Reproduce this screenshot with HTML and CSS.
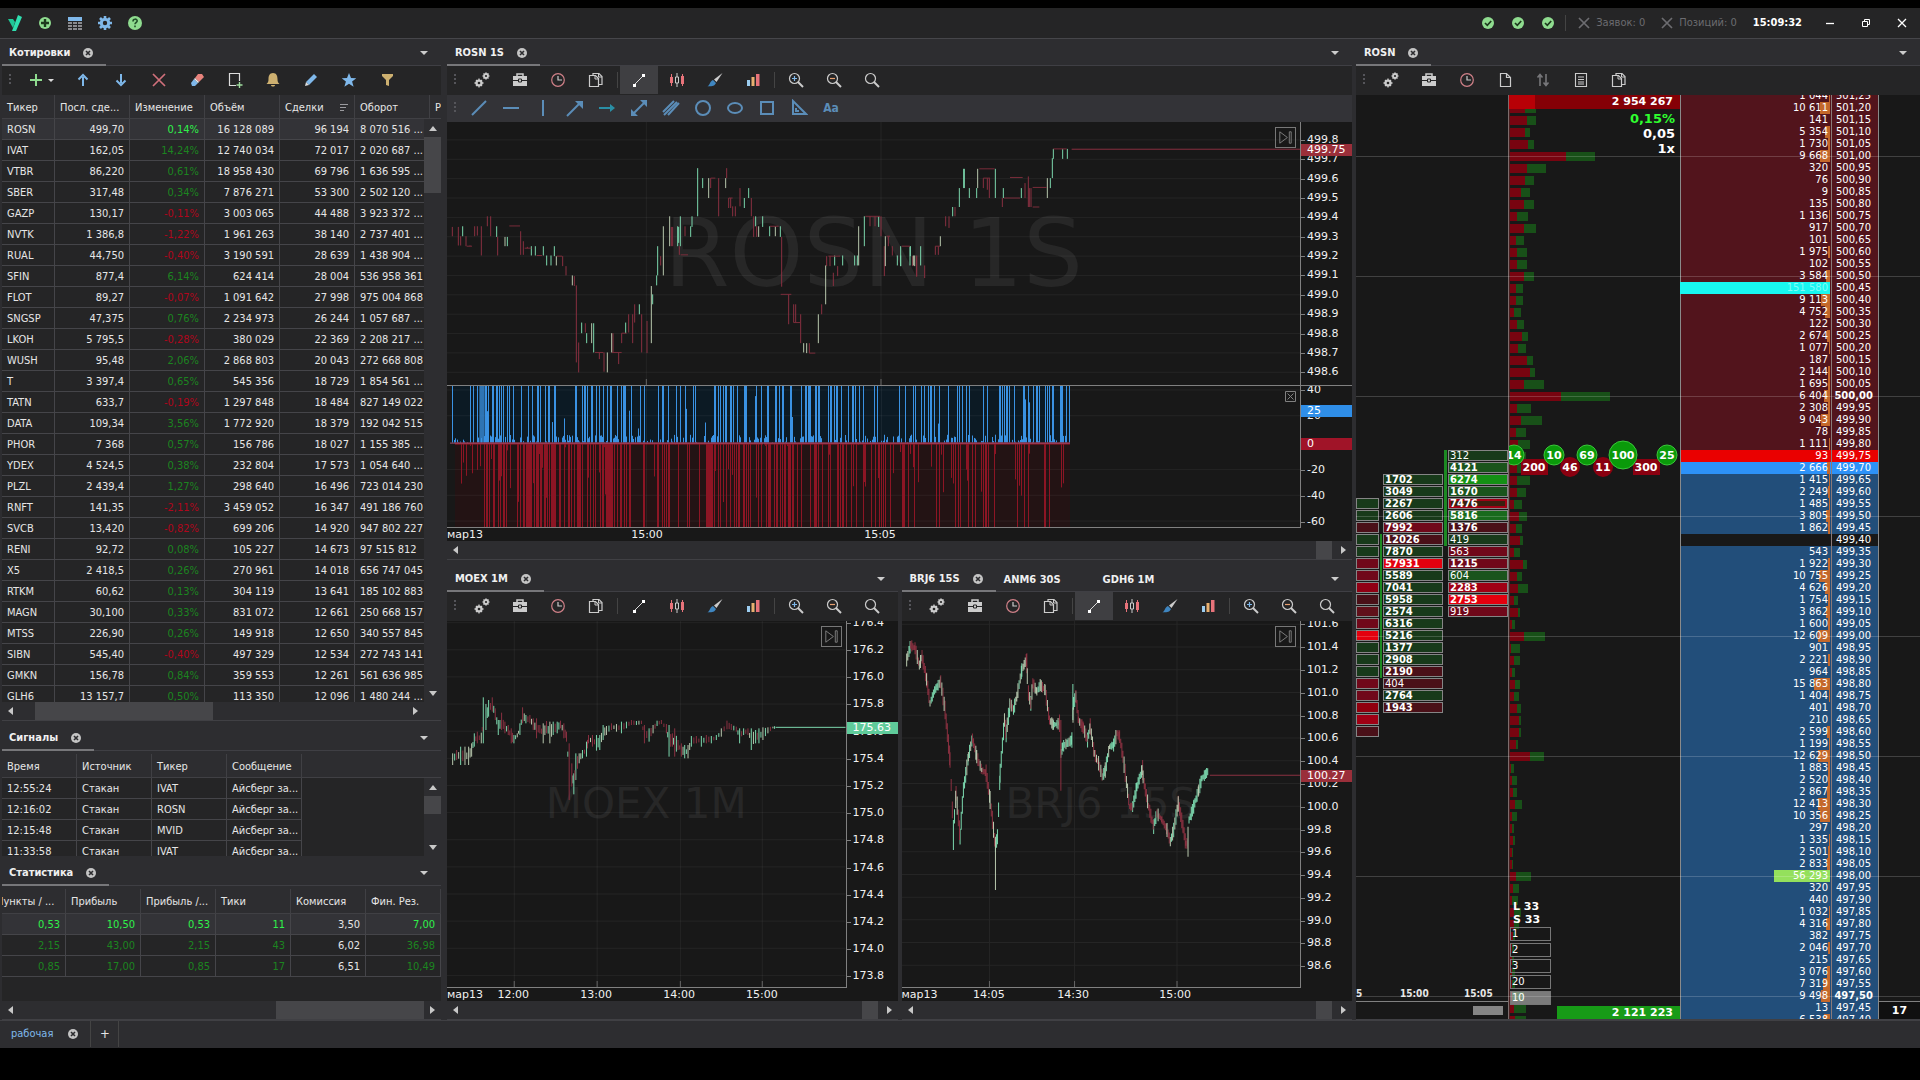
FILE: index.html
```html
<!DOCTYPE html>
<html lang="ru">
<head>
  <meta charset="UTF-8">
  <meta name="viewport" content="width=device-width, initial-scale=1.0">
  <title>Рабочая</title>
  <link rel="stylesheet" href="styles.css">
</head>
<body>

  <!-- Icon sprite -->
  <svg class="sprite" xmlns="http://www.w3.org/2000/svg">
    <symbol id="i-close-tab" viewBox="0 0 12 12"><circle cx="6" cy="6" r="5" fill="#c4c4c4"/><path d="M4 4l4 4M8 4l-4 4" stroke="#2d2d30" stroke-width="1.6"/></symbol>
    <symbol id="i-logo" viewBox="0 0 16 16"><path d="M1 4h5l2 3-2 6z" fill="#1fc796"/><path d="M11 0l4 2-6 14H5z" fill="#2fe0b0"/></symbol>
    <symbol id="i-add" viewBox="0 0 16 16"><circle cx="8" cy="8" r="6" fill="#8fdc8f"/><path d="M8 4v8M4 8h8" stroke="#1d3a1d" stroke-width="2.4"/></symbol>
    <symbol id="i-grid" viewBox="0 0 16 16"><path d="M1 2h14v4H1z" fill="#7fb8ea"/><path d="M1 7h4v2H1zM6 7h4v2H6zM11 7h4v2h-4zM1 10h4v2H1zM6 10h4v2H6zM11 10h4v2h-4zM1 13h4v2H1zM6 13h4v2H6zM11 13h4v2h-4z" fill="#8a8a8e"/></symbol>
    <symbol id="i-gear" viewBox="0 0 16 16"><circle cx="8" cy="8" r="3.7" fill="none" stroke="#7fb8ea" stroke-width="3"/><path d="M8 1v3M8 12v3M1 8h3M12 8h3M3 3l2 2M11 11l2 2M13 3l-2 2M5 11l-2 2" stroke="#7fb8ea" stroke-width="2.6"/></symbol>
    <symbol id="i-help" viewBox="0 0 16 16"><circle cx="8" cy="8" r="7" fill="#8fdc8f"/><path d="M6 6.4c0-3 4.200-2.800 4.200-.4 0 1.500-2.200 1.500-2.200 3.200M8 10.500v1.700" fill="none" stroke="#23502a" stroke-width="1.600"/></symbol>
    <symbol id="i-check" viewBox="0 0 16 16"><circle cx="8" cy="8" r="6" fill="#8fdc8f"/><path d="M5 8l2.300 2.300L11.200 6" fill="none" stroke="#1d3a1d" stroke-width="1.700"/></symbol>
    <symbol id="i-x" viewBox="0 0 16 16"><path d="M3 3l10 10M13 3L3 13" stroke="currentColor" stroke-width="1.700"/></symbol>
    <symbol id="i-min" viewBox="0 0 16 16"><path d="M4 8.500h8" stroke="#fff" stroke-width="1.300"/></symbol>
    <symbol id="i-restore" viewBox="0 0 16 16"><path d="M4.500 6.500h5v5h-5zM6.500 6.500v-2h5v5h-2" fill="none" stroke="#fff"/></symbol>
    <symbol id="i-win-close" viewBox="0 0 16 16"><path d="M4 4l8 8M12 4l-8 8" stroke="#fff" stroke-width="1.300"/></symbol>
    <symbol id="i-plus" viewBox="0 0 16 16"><path d="M8 2v12M2 8h12" stroke="#8fdc8f" stroke-width="2"/></symbol>
    <symbol id="i-up" viewBox="0 0 16 16"><path d="M8 14V5" stroke="#7fb8ea" stroke-width="2"/><path d="M3.500 7.500L8 3l4.500 4.500" fill="none" stroke="#7fb8ea" stroke-width="2"/></symbol>
    <symbol id="i-down" viewBox="0 0 16 16"><path d="M8 2v9" stroke="#7fb8ea" stroke-width="2"/><path d="M3.500 8.500L8 13l4.500-4.500" fill="none" stroke="#7fb8ea" stroke-width="2"/></symbol>
    <symbol id="i-del" viewBox="0 0 16 16"><path d="M2 2l12 12M14 2L2 14" stroke="#d0707a" stroke-width="1.700"/></symbol>
    <symbol id="i-eraser" viewBox="0 0 16 16"><path d="M9 2h4l2 3-5 5-4-4z" fill="#e8837c"/><path d="M5 7l4 4-3 3H3l-1-3z" fill="#7fb8ea"/><path d="M6 6l4 4-1 1-4-4z" fill="#eee"/></symbol>
    <symbol id="i-newsheet" viewBox="0 0 16 16"><path d="M12.500 9V1.500h-10v12H9" fill="none" stroke="#ddd" stroke-width="1.200"/><path d="M12.500 10v6M9.500 13h6" stroke="#9fdc9f" stroke-width="1.400"/></symbol>
    <symbol id="i-bell" viewBox="0 0 16 16"><path d="M8 1c3.500 0 4.500 3 4.500 6 0 2.500.5 3.500 2 5h-13c1.500-1.500 2-2.500 2-5C3.500 4 4.500 1 8 1zM6 13h4c0 2-4 2-4 0z" fill="#cdb070"/></symbol>
    <symbol id="i-pencil" viewBox="0 0 16 16"><path d="M11 2l3 3-8 8-3-3z" fill="#7fb8ea"/><path d="M3 10l3 3-4 1z" fill="#ddd"/></symbol>
    <symbol id="i-star" viewBox="0 0 16 16"><path d="M8 1l2 5 5.300.2-4.200 3.300 1.500 5.300L8 11.800l-4.600 3 1.500-5.300L.7 6.200 6 6z" fill="#7fb8ea"/></symbol>
    <symbol id="i-filter" viewBox="0 0 16 16"><path d="M3 2h11v2l-4 4v6l-3-1V8L3 4z" fill="#cdb070"/></symbol>
    <symbol id="i-gears" viewBox="0 0 16 16"><circle cx="5" cy="11" r="2.600" fill="none" stroke="#ccc" stroke-width="2"/><path d="M5 6.500v9M.5 11h9M2 8l6 6M8 8l-6 6" stroke="#ccc" stroke-width="1.300"/><circle cx="5" cy="11" r="1.300" fill="#252525"/><circle cx="12" cy="4" r="2" fill="none" stroke="#ccc" stroke-width="1.800"/><path d="M12 .3v7.400M8.300 4h7.400M9.500 1.500l5 5M14.500 1.500l-5 5" stroke="#ccc" stroke-width="1.100"/><circle cx="12" cy="4" r="1.100" fill="#252525"/></symbol>
    <symbol id="i-case" viewBox="0 0 16 16"><path d="M5 4V2h6v2" fill="none" stroke="#ccc" stroke-width="1.500"/><path d="M1 4h14v4H1zM1 9h14v5H1z" fill="#ccc"/><path d="M6.500 7h3v3h-3z" fill="#ccc" stroke="#252525"/></symbol>
    <symbol id="i-clock" viewBox="0 0 16 16"><circle cx="8" cy="8" r="6.300" fill="none" stroke="#d08088" stroke-width="1.200"/><path d="M8 4v4h4" fill="none" stroke="#ccc" stroke-width="1.200"/></symbol>
    <symbol id="i-copy" viewBox="0 0 16 16"><path d="M1.500 3.500h6l3 3v8h-9zM5 3V1.500h6l3 3v8h-3" fill="none" stroke="#ccc" stroke-width="1.200"/><path d="M7 3.500V7h3.500M10.500 1.500V5H14" fill="none" stroke="#ccc"/></symbol>
    <symbol id="i-line" viewBox="0 0 16 16"><path d="M3 13L13 3" stroke="#ddd"/><path d="M2 12h3v3H2zM11 2h3v3h-3z" fill="#fff"/></symbol>
    <symbol id="i-candles" viewBox="0 0 16 16"><path d="M2.500 2v12M13.500 2v12" stroke="#e8737a"/><path d="M1 5h3v6H1zM12 4h3v8h-3z" fill="#e8737a"/><path d="M8 1v14" stroke="#ccc"/><path d="M6.500 5h3v6h-3z" fill="#252525" stroke="#ccc"/></symbol>
    <symbol id="i-brush" viewBox="0 0 16 16"><path d="M15.500 1L7 7.500l2.500 2.500z" fill="#ccc"/><path d="M6 8l3 3c-2 4-5 3-8.500 3.500 2.500-1.500 2.500-5.500 5.500-6.500z" fill="#3f86c0"/></symbol>
    <symbol id="i-bars" viewBox="0 0 16 16"><path d="M2 8h3v6H2z" fill="#9ccdf0"/><path d="M6.500 5h3v9h-3z" fill="#e8b070"/><path d="M11 2h3.500v12H11z" fill="#e8737a"/></symbol>
    <symbol id="i-zoom" viewBox="0 0 16 16"><circle cx="6.500" cy="6.500" r="5" fill="none" stroke="#ccc" stroke-width="1.200"/><path d="M10 10l5 5" stroke="#ccc" stroke-width="2"/></symbol>
    <symbol id="i-zoom-in" viewBox="0 0 16 16"><use href="#i-zoom"/><path d="M6.500 4v5M4 6.500h5" stroke="#7fb8ea" stroke-width="1.200"/></symbol>
    <symbol id="i-zoom-out" viewBox="0 0 16 16"><use href="#i-zoom"/><path d="M4 6.500h5" stroke="#e8a070" stroke-width="1.200"/></symbol>
    <symbol id="i-page" viewBox="0 0 16 16"><path d="M3.500 1.500h6l4 4v9h-10zM9.500 1.500v4h4" fill="none" stroke="#ccc" stroke-width="1.200"/></symbol>
    <symbol id="i-sort" viewBox="0 0 16 16"><path d="M5 14V3M2.500 5.500L5 2.500l2.500 3M11 2v11M8.500 10.500l2.500 3 2.500-3" fill="none" stroke="#77777a" stroke-width="1.600"/></symbol>
    <symbol id="i-list" viewBox="0 0 16 16"><path d="M2.500 1.500h11v13h-11zM5 5h6M5 7.500h6M5 10h6M5 12h6" fill="none" stroke="#ccc" stroke-width="1.100"/></symbol>
    <symbol id="i-sorted" viewBox="0 0 10 10"><path d="M1 1.500h8M1 4.500h6M1 7.500h4" stroke="#9a9a9e"/></symbol>
    <symbol id="d-line" viewBox="0 0 18 18"><path d="M2 16L16 2"/></symbol>
    <symbol id="d-hor" viewBox="0 0 18 18"><path d="M1 9h16"/></symbol>
    <symbol id="d-ver" viewBox="0 0 18 18"><path d="M9 1v16"/></symbol>
    <symbol id="d-arrow" viewBox="0 0 18 18"><path d="M1 17L15 3"/><path d="M9 2h8v8z" fill="#5b8db8" stroke="none"/></symbol>
    <symbol id="d-right" viewBox="0 0 18 18"><path d="M1 9h13" stroke="#2a8fa6"/><path d="M12 5l5 4-5 4z" fill="#2a8fa6" stroke="none"/></symbol>
    <symbol id="d-both" viewBox="0 0 18 18"><path d="M3 15L15 3"/><path d="M10 1h7v7zM1 10v7h7z" fill="#5b8db8" stroke="none"/></symbol>
    <symbol id="d-par" viewBox="0 0 18 18"><path d="M1 13L12 2M6 16L17 4M2 16L15 3"/></symbol>
    <symbol id="d-circle" viewBox="0 0 18 18"><circle cx="9" cy="9" r="7"/></symbol>
    <symbol id="d-oval" viewBox="0 0 18 18"><ellipse cx="9" cy="9" rx="7" ry="5"/></symbol>
    <symbol id="d-rect" viewBox="0 0 18 18"><path d="M3 3h12v12H3z"/></symbol>
    <symbol id="d-tri" viewBox="0 0 18 18"><path d="M3 2v13h13zM6 9v3h3"/></symbol>
  </svg>

  <header class="titlebar">
    <nav class="menu">
      <button aria-label="Главное меню"><svg><use href="#i-logo"/></svg></button>
      <button aria-label="Добавить"><svg><use href="#i-add"/></svg></button>
      <button aria-label="Таблицы"><svg><use href="#i-grid"/></svg></button>
      <button aria-label="Настройки"><svg><use href="#i-gear"/></svg></button>
      <button aria-label="Справка"><svg><use href="#i-help"/></svg></button>
    </nav>
    <div class="status">
      <svg><use href="#i-check"/></svg>
      <svg><use href="#i-check"/></svg>
      <svg><use href="#i-check"/></svg>
    </div>
    <button class="cancel" disabled><svg><use href="#i-x"/></svg>Заявок: 0</button>
    <button class="cancel" disabled><svg><use href="#i-x"/></svg>Позиций: 0</button>
    <time class="clock">15:09:32</time>
    <div class="window-buttons">
      <button aria-label="Свернуть"><svg><use href="#i-min"/></svg></button>
      <button aria-label="Восстановить"><svg><use href="#i-restore"/></svg></button>
      <button aria-label="Закрыть"><svg><use href="#i-win-close"/></svg></button>
    </div>
  </header>

  <main class="workspace">
    <div class="side">
      <section class="panel">
        <div class="tabs"><div class="tab active">Котировки<button aria-label="Закрыть вкладку"><svg><use href="#i-close-tab"/></svg></button></div></div>
        <div class="toolbar">
          <i class="grip"></i>
          <button class="drop" aria-label="Добавить тикер"><svg><use href="#i-plus"/></svg></button>
          <button aria-label="Вверх"><svg><use href="#i-up"/></svg></button>
          <button aria-label="Вниз"><svg><use href="#i-down"/></svg></button>
          <button aria-label="Удалить"><svg><use href="#i-del"/></svg></button>
          <button aria-label="Очистить"><svg><use href="#i-eraser"/></svg></button>
          <button aria-label="Новый лист"><svg><use href="#i-newsheet"/></svg></button>
          <button aria-label="Оповещение"><svg><use href="#i-bell"/></svg></button>
          <button aria-label="Изменить"><svg><use href="#i-pencil"/></svg></button>
          <button aria-label="Избранное"><svg><use href="#i-star"/></svg></button>
          <button aria-label="Фильтр"><svg><use href="#i-filter"/></svg></button>
        </div>
        <div class="table-wrap">
          <table class="quotes">
            <thead><tr><th>Тикер</th><th>Посл. сде...</th><th>Изменение</th><th>Объём</th><th class="sorted"><div>Сделки<svg><use href="#i-sorted"/></svg></div></th><th>Оборот</th><th>Р</th></tr></thead>
            <tbody id="quotes"></tbody>
          </table>
          <div class="vscroll"><i class="thumb"></i></div>
        </div>
        <div class="hscroll quotes-scroll"><i class="thumb"></i></div>
      </section>

      <section class="panel">
        <div class="tabs"><div class="tab active">Сигналы<button aria-label="Закрыть вкладку"><svg><use href="#i-close-tab"/></svg></button></div></div>
        <div class="table-wrap lower">
          <table class="signals">
            <thead><tr><th>Время</th><th>Источник</th><th>Тикер</th><th>Сообщение</th><th></th></tr></thead>
            <tbody id="signals"></tbody>
          </table>
          <div class="vscroll short"><i class="thumb"></i></div>
        </div>
      </section>

      <section class="panel">
        <div class="tabs"><div class="tab active">Статистика<button aria-label="Закрыть вкладку"><svg><use href="#i-close-tab"/></svg></button></div></div>
        <div class="table-wrap lower scrolled">
          <table class="stats">
            <thead><tr><th>Пункты / ...</th><th>Прибыль</th><th>Прибыль /...</th><th>Тики</th><th>Комиссия</th><th>Фин. Рез.</th></tr></thead>
            <tbody id="stats"></tbody>
          </table>
        </div>
        <div class="hscroll stats-scroll"><i class="thumb"></i></div>
      </section>
    </div>

    <div class="charts">
      <section class="panel wide">
        <div class="tabs"><div class="tab active">ROSN 1S<button aria-label="Закрыть вкладку"><svg><use href="#i-close-tab"/></svg></button></div></div>
        <div class="toolbar" data-tools="chart" data-active="4"></div>
        <div class="toolbar drawing" data-tools="draw"></div>
        <div class="chart with-sub">
          <div class="plot" id="rosn"><span class="watermark big">ROSN 1S</span><button class="to-end" aria-label="В конец"><svg viewBox="0 0 20 20"><path d="M4 4v12l8-6zM14 4h2v12h-2z"/></svg></button></div>
          <div class="yaxis" id="rosn-y"></div>
          <div class="plot sub" id="delta"><button class="close-sub" aria-label="Закрыть индикатор"><svg viewBox="0 0 11 11"><path d="M.5.5h10v10H.5zM2.500 2.500l6 6M8.500 2.500l-6 6"/></svg></button></div>
          <div class="yaxis sub" id="delta-y"></div>
          <div class="xaxis" id="rosn-x"></div>
        </div>
        <div class="hscroll chart-scroll"><i class="thumb"></i></div>
      </section>

      <section class="panel">
        <div class="tabs"><div class="tab active">MOEX 1M<button aria-label="Закрыть вкладку"><svg><use href="#i-close-tab"/></svg></button></div></div>
        <div class="toolbar" data-tools="chart"></div>
        <div class="chart">
          <div class="plot" id="moex"><span class="watermark">MOEX 1M</span><button class="to-end" aria-label="В конец"><svg viewBox="0 0 20 20"><path d="M4 4v12l8-6zM14 4h2v12h-2z"/></svg></button></div>
          <div class="yaxis" id="moex-y"></div>
          <div class="xaxis" id="moex-x"></div>
        </div>
        <div class="hscroll chart-scroll"><i class="thumb"></i></div>
      </section>

      <section class="panel">
        <div class="tabs">
          <div class="tab active">BRJ6 15S<button aria-label="Закрыть вкладку"><svg><use href="#i-close-tab"/></svg></button></div>
          <div class="tab">ANM6 30S</div>
          <div class="tab">GDH6 1M</div>
        </div>
        <div class="toolbar" data-tools="chart" data-active="4"></div>
        <div class="chart">
          <div class="plot" id="brj"><span class="watermark">BRJ6 15S</span><button class="to-end" aria-label="В конец"><svg viewBox="0 0 20 20"><path d="M4 4v12l8-6zM14 4h2v12h-2z"/></svg></button></div>
          <div class="yaxis" id="brj-y"></div>
          <div class="xaxis" id="brj-x"></div>
        </div>
        <div class="hscroll chart-scroll"><i class="thumb"></i></div>
      </section>
    </div>

    <section class="panel dom-panel">
      <div class="tabs"><div class="tab active">ROSN<button aria-label="Закрыть вкладку"><svg><use href="#i-close-tab"/></svg></button></div></div>
      <div class="toolbar" data-tools="dom"></div>
      <div class="dom">
        <div class="levels" id="levels"></div>
        <div class="cluster-area">
          <div class="clusters" id="clusters"></div>
          <div class="cluster-foot">
            <div class="times"><span>5</span><span>15:00</span><span>15:05</span></div>
            <div class="foot-scroll"><i></i></div>
          </div>
        </div>
        <div class="tape">
          <div class="profile" id="profile"></div>
          <svg class="trades" id="trades"></svg>
          <div class="tape-head">
            <b class="sell-total">2 954 267</b>
            <b class="change">0,15%</b>
            <b>0,05</b>
            <b>1x</b>
          </div>
          <div class="lots">
            <b>L 33</b>
            <b>S 33</b>
            <button>1</button>
            <button>2</button>
            <button>3</button>
            <button>20</button>
            <button class="picked">10</button>
          </div>
          <b class="buy-total">2 121 223</b>
        </div>
        <table class="book"><tbody id="book"></tbody></table>
        <div class="dom-tail"><b>17</b></div>
      </div>
    </section>
  </main>

  <footer class="pages">
    <div class="page">рабочая<button aria-label="Закрыть страницу"><svg><use href="#i-close-tab"/></svg></button></div>
    <button class="new-page" aria-label="Новая страница">+</button>
  </footer>

  <script src="script.js"></script>
</body>
</html>
```

FILE: styles.css
```css
* {
  box-sizing: border-box;
}

body {
  margin: 0;
  height: 100vh;
  padding: 8px 0 32px;
  display: flex;
  flex-direction: column;
  overflow: hidden;
  background: #000;
  color: #e6e6e6;
  font-family: "DejaVu Sans Condensed", "DejaVu Sans", Tahoma, sans-serif;
  font-size: 11px;
  line-height: 14px;
}

button {
  margin: 0;
  padding: 0;
  border: 0;
  background: none;
  color: inherit;
  font: inherit;
  display: flex;
  align-items: center;
  justify-content: center;
}

.sprite {
  display: none;
}

/* Title bar */
.titlebar {
  flex: none;
  height: 31px;
  display: flex;
  align-items: center;
  background: #252526;
  border-bottom: 1px solid #46464a;
}

.titlebar svg {
  width: 16px;
  height: 16px;
}

.menu {
  display: flex;
  margin-right: auto;
}

.menu button {
  width: 30px;
  height: 30px;
}

.status {
  display: flex;
  gap: 14px;
  padding-right: 9px;
  border-right: 1px solid #444;
}

.cancel {
  gap: 4px;
  margin-left: 10px;
  color: #6c6c70;
}

.cancel + .cancel {
  margin-left: 14px;
}

.clock {
  margin-left: 16px;
  font-weight: bold;
  color: #fff;
}

.window-buttons {
  display: flex;
  margin-left: 10px;
}

.window-buttons button {
  width: 36px;
  height: 30px;
}

/* Work area */
.workspace {
  flex: 1;
  min-height: 0;
  display: grid;
  grid-template-columns: 441px minmax(0, 1fr) 564px;
  background: #2d2d30;
}

.side {
  display: grid;
  grid-template-rows: 682fr 132fr 161fr;
  gap: 3px;
  min-height: 0;
  padding-left: 2px;
}

.charts {
  display: grid;
  grid-template-columns: minmax(0, 1fr) minmax(0, 1fr);
  grid-template-rows: 521fr 455fr;
  gap: 5px 4px;
  min-height: 0;
  padding: 0 4px 0 6px;
}

.wide {
  grid-column: 1 / 3;
}

.panel {
  display: flex;
  flex-direction: column;
  min-width: 0;
  min-height: 0;
}

.tabs {
  flex: none;
  position: relative;
  height: 27px;
  display: flex;
  border-bottom: 1px solid #3f3f44;
}

.tabs::after {
  content: "";
  position: absolute;
  right: 13px;
  top: 12px;
  border: 4px solid transparent;
  border-top-color: #ccc;
  border-bottom: 0;
}

.tab {
  height: 27px;
  display: flex;
  align-items: center;
  gap: 12px;
  padding: 2px 12px 0 8px;
  font-weight: bold;
  color: #f0f0f0;
}

.tab:not(.active) {
  padding-right: 34px;
}

.tab.active {
  border-bottom: 2px solid #77777a;
}

.side .tab {
  padding-left: 7px;
}

.tab svg,
.page svg {
  display: block;
  width: 12px;
  height: 12px;
}

.toolbar {
  flex: none;
  height: 29px;
  display: flex;
  align-items: center;
  padding-bottom: 1px;
  background: #252526;
}

.toolbar button {
  width: 38px;
  height: 28px;
  position: relative;
}

.toolbar button.on {
  background: #3f3f42;
}

.toolbar svg {
  width: 16px;
  height: 16px;
}

.toolbar .drop {
  width: 46px;
  padding-right: 10px;
}

.drop::after {
  content: "";
  position: absolute;
  right: 10px;
  border: 3px solid transparent;
  border-top-color: #ddd;
  border-bottom: 0;
}

.grip {
  width: 2px;
  height: 12px;
  margin: 0 7px;
  background: repeating-linear-gradient(#55555a 0 2px, transparent 2px 4px);
}

.divider {
  width: 1px;
  height: 16px;
  margin: 0 2px;
  background: #444;
}

.drawing {
  height: 27px;
  background: #333337;
}

.drawing button {
  width: 32px;
  height: 26px;
  color: #5b8db8;
  font-weight: bold;
  font-size: 12px;
}

.drawing svg {
  width: 18px;
  height: 18px;
  fill: none;
  stroke: #5b8db8;
  stroke-width: 2;
}

/* Tables */
.table-wrap {
  flex: 1;
  min-height: 0;
  position: relative;
  overflow: hidden;
  background: #252526;
}

.lower {
  margin-top: 3px;
}

.scrolled {
  display: flex;
  justify-content: flex-end;
  align-items: flex-start;
}

table {
  border-collapse: separate;
  border-spacing: 0;
  table-layout: fixed;
}

.table-wrap table {
  flex: none;
  width: 450px;
}

.table-wrap th {
  height: 24px;
  padding: 2px 5px 0;
  overflow: hidden;
  text-align: left;
  font-weight: normal;
  white-space: nowrap;
  background: #2d2d30;
  border-right: 1px solid #404044;
  border-bottom: 1px solid #404044;
}

.table-wrap td {
  height: 21px;
  padding: 2px 5px 0;
  overflow: hidden;
  white-space: nowrap;
  border-right: 1px solid #454549;
  border-bottom: 1px solid #454549;
}

.table-wrap tr.selected td {
  background: #333337;
}

.quotes th:first-child {
  width: 53px;
}

.quotes th {
  width: 75px;
}

.quotes th:last-child {
  width: 22px;
}

.quotes td:nth-child(n+2):nth-child(-n+5),
.stats td {
  text-align: right;
}

.sorted div {
  display: flex;
  align-items: center;
  justify-content: space-between;
}

.sorted svg {
  width: 10px;
  height: 10px;
}

.signals th {
  width: 75px;
}

.signals th:last-child {
  width: auto;
}

.signals td:last-child {
  border: 0;
}

.scrolled th {
  height: 25px;
}

.up {
  color: #1c8420;
}

.down {
  color: #b0061c;
}

.selected .up {
  color: #2ff04a;
}

/* Scroll bars */
.vscroll {
  position: absolute;
  right: 0;
  top: 24px;
  bottom: 0;
  width: 17px;
  padding-top: 18px;
  background: #2d2d30;
}

.vscroll::before,
.vscroll::after {
  content: "";
  position: absolute;
  left: 5px;
  border: 4px solid transparent;
}

.vscroll::before {
  top: 7px;
  border-bottom: 5px solid #c8c8c8;
  border-top: 0;
}

.vscroll::after {
  bottom: 6px;
  border-top: 5px solid #c8c8c8;
  border-bottom: 0;
}

.thumb {
  display: block;
  background: #464649;
}

.vscroll .thumb {
  height: 56px;
}

.short .thumb {
  height: 18px;
}

.hscroll {
  flex: none;
  position: relative;
  height: 19px;
  display: flex;
  background: #2d2d30;
  border-bottom: 1px solid #404044;
}

.hscroll::before,
.hscroll::after {
  content: "";
  position: absolute;
  top: 5px;
  border: 4px solid transparent;
}

.hscroll::before {
  left: 6px;
  border-right: 5px solid #c8c8c8;
  border-left: 0;
}

.hscroll::after {
  right: 6px;
  border-left: 5px solid #c8c8c8;
  border-right: 0;
}

.quotes-scroll::after {
  right: 23px;
}

.quotes-scroll .thumb {
  width: 178px;
  margin-left: 33px;
}

.stats-scroll .thumb {
  width: 148px;
  margin: 0 17px 0 auto;
}

.chart-scroll .thumb {
  width: 16px;
  margin: 0 20px 0 auto;
}

/* Charts */
.chart {
  flex: 1;
  min-height: 0;
  display: grid;
  grid-template-columns: minmax(0, 1fr) 52px;
  grid-template-rows: minmax(0, 1fr) 13px;
  background: #181818;
  font-family: "DejaVu Sans", Verdana, sans-serif;
}

.with-sub {
  grid-template-rows: minmax(0, 264fr) minmax(0, 142fr) 13px;
}

.plot {
  position: relative;
  display: flex;
  align-items: center;
  justify-content: center;
  border-bottom: 1px solid #808080;
}

.plot > svg {
  position: absolute;
  left: 0;
  top: 0;
  width: 100%;
  height: 100%;
}

.watermark {
  color: #272727;
  font-size: 42px;
  line-height: 1;
  white-space: nowrap;
}

.big {
  font-size: 94px;
}

.to-end {
  position: absolute;
  right: 4px;
  top: 5px;
  z-index: 1;
  width: 21px;
  height: 21px;
  border: 1px solid #777;
}

.to-end svg,
.close-sub svg {
  width: 19px;
  height: 19px;
  fill: none;
  stroke: #808080;
}

.close-sub {
  position: absolute;
  right: 4px;
  top: 5px;
  z-index: 1;
}

.close-sub svg {
  width: 11px;
  height: 11px;
}

.yaxis {
  position: relative;
  overflow: hidden;
  border-left: 1px solid #808080;
  color: #f0f0f0;
}

.with-sub .yaxis:not(.sub) {
  border-bottom: 1px solid #808080;
}

.yaxis span {
  position: absolute;
  left: 0;
  height: 14px;
  margin-top: -7px;
  padding-left: 6px;
}

.yaxis span::before {
  content: "";
  position: absolute;
  left: 0;
  top: 7px;
  width: 4px;
  height: 1px;
  background: #808080;
}

.yaxis .tag {
  width: 100%;
  height: 12px;
  margin-top: -6px;
  line-height: 12px;
  color: #fff;
}

.yaxis .tag::before {
  display: none;
}

.tag.red {
  background: #9a2f3a;
}

.tag.crimson {
  background: #a01428;
}

.tag.blue {
  background: #2f8ee8;
}

.tag.mint {
  background: #5fcb9a;
}

.xaxis {
  position: relative;
  color: #f0f0f0;
}

.xaxis span {
  position: absolute;
  top: 0;
  transform: translateX(-50%);
}

.xaxis span:first-child {
  left: 0;
  transform: none;
}

/* Order book */
.dom {
  flex: 1;
  min-height: 0;
  position: relative;
  overflow: hidden;
  display: grid;
  grid-template-columns: 153px minmax(0, 1fr) 199px 41px;
  grid-template-rows: minmax(0, 1fr);
  align-items: start;
  background: #181818;
  border-bottom: 1px solid #404044;
  font-family: "DejaVu Sans", Verdana, sans-serif;
}

.levels {
  position: absolute;
  left: 0;
  right: 0;
  top: -5px;
  z-index: 1;
  display: grid;
  grid-auto-rows: 12px;
  pointer-events: none;
}

.levels i {
  align-self: center;
  height: 1px;
  background: rgba(255, 255, 255, 0.18);
}

.cluster-area {
  position: relative;
  min-width: 0;
  height: 100%;
  overflow: hidden;
  border-right: 1px solid #7c6c6c;
}

.clusters {
  display: grid;
  grid-template-columns: 23px 2px 60px 3px 60px;
  grid-auto-rows: 12px;
  column-gap: 1px;
  margin-top: -5px;
}

.clusters span {
  margin: 0 0 1px;
  padding-left: 1px;
  border: 1px solid #858585;
  font-size: 10px;
  line-height: 9px;
  color: #fff;
}

.clusters span.strong {
  font-weight: bold;
}

.clusters span.hot {
  box-shadow: inset 0 0 0 2px #a00014;
}

.clusters i {
  background: #1c8a22;
}

.cluster-foot {
  position: absolute;
  left: 0;
  right: 0;
  bottom: 0;
}

.times {
  display: grid;
  grid-template-columns: 44px 64px 1fr;
  border-bottom: 1px solid #808080;
  font: bold 10px/14px "DejaVu Sans Condensed", sans-serif;
}

.foot-scroll {
  height: 17px;
  padding: 4px 5px 4px 0;
  display: flex;
  justify-content: flex-end;
}

.foot-scroll i {
  width: 30px;
  background: #858585;
}

.tape {
  position: relative;
  min-width: 0;
  height: 100%;
  overflow: hidden;
  color: #fff;
}

.profile {
  display: grid;
  grid-auto-rows: 12px;
  margin-top: -5px;
  border-left: 1px solid #4a2020;
}

.profile div {
  display: flex;
  height: 9px;
  align-self: center;
}

.profile i:first-child {
  background: #780410;
}

.profile i:last-child {
  background: #185018;
}

.trades {
  position: absolute;
  left: 0;
  top: 0;
  width: 100%;
  height: 100%;
}

.trades text {
  fill: #fff;
  font-size: 11px;
  font-weight: bold;
  text-anchor: middle;
}

.tape-head {
  position: absolute;
  left: 0;
  right: 0;
  top: 0;
  display: flex;
  flex-direction: column;
  padding-bottom: 4px;
  font-size: 13px;
  line-height: 15px;
  text-align: right;
}

.tape-head b {
  padding-right: 5px;
}

.tape-head .sell-total {
  margin-bottom: 2px;
  padding-right: 7px;
  background: linear-gradient(90deg, #b80006 0 26px, #850006 26px);
  font-size: 11px;
  line-height: 14px;
}

.change {
  color: #2fff2f;
}

.lots {
  position: absolute;
  left: 1px;
  bottom: 14px;
  display: flex;
  flex-direction: column;
  gap: 2px;
}

.lots b {
  padding-left: 3px;
  line-height: 11px;
}

.lots button {
  width: 41px;
  height: 14px;
  padding-left: 1px;
  justify-content: flex-start;
  border: 1px solid #777;
  font-size: 10px;
}

.lots .picked {
  background: rgba(190, 190, 190, 0.6);
}

.buy-total {
  position: absolute;
  right: 0;
  bottom: 0;
  width: 123px;
  height: 13px;
  padding-right: 7px;
  line-height: 14px;
  text-align: right;
  background: #179b17;
}

.book {
  width: 199px;
  margin-top: -5px;
  border-right: 1px solid #8a8a8a;
  border-left: 1px solid #8a8a8a;
  font-size: 10px;
  color: #fff;
}

.book td {
  position: relative;
  height: 12px;
  padding: 0;
  line-height: 12px;
}

.book .vol {
  width: 151px;
  padding-right: 3px;
  text-align: right;
  border-right: 1px solid #8a7a7a;
}

.book .price {
  padding-right: 7px;
  text-align: right;
}

.book .round {
  padding-right: 5px;
  font-weight: bold;
}

.book .vol i {
  position: absolute;
  right: 1px;
  top: 0;
  height: 12px;
  background: #c4682a;
}

.book .vol span {
  position: relative;
}

.book i.huge {
  background: #18f6f0;
}

.book i.big-bid {
  background: #94e05c;
}

.book .huge + span {
  color: #7ffcf8;
}

.ask {
  background: #52141c;
}

.bid {
  background: #224e7a;
}

.best-ask {
  background: #ea0000;
}

.best-bid {
  background: #2d92f8;
}

.dom-tail {
  height: 100%;
  display: flex;
  flex-direction: column;
  justify-content: flex-end;
}

.dom-tail b {
  height: 18px;
  line-height: 18px;
  text-align: center;
  color: #fff;
  background: #101010;
  border-top: 1px solid #808080;
}

/* Pages */
.pages {
  flex: none;
  height: 28px;
  display: flex;
  padding-bottom: 1px;
  background: #2d2d30;
  border-top: 1px solid #404044;
}

.page {
  display: flex;
  align-items: center;
  gap: 14px;
  padding: 0 11px;
  color: #7fb8ea;
  border-right: 1px solid #444;
}

.new-page {
  width: 28px;
  font-size: 13px;
  border-right: 1px solid #444;
}
```

FILE: script.js
```js
const el = id => document.getElementById(id);

// ---- toolbars ----
const chartTools = ['gears', 'case', 'clock', 'copy', 'line', 'candles', 'brush', 'bars', 'zoom-in', 'zoom-out', 'zoom'];
const domTools = ['gears', 'case', 'clock', 'page', 'sort', 'list', 'copy'];
const drawTools = ['line', 'hor', 'ver', 'arrow', 'right', 'both', 'par', 'circle', 'oval', 'rect', 'tri'];

document.querySelectorAll('[data-tools]').forEach(bar => {
  const kind = bar.dataset.tools;
  let html = '<i class="grip"></i>';
  if (kind === 'draw') {
    html += drawTools.map(t => `<button aria-label="${t}"><svg><use href="#d-${t}"/></svg></button>`).join('');
    html += '<button>Aa</button>';
  } else {
    (kind === 'chart' ? chartTools : domTools).forEach((t, i) => {
      if (kind === 'chart' && (i === 4 || i === 8)) html += '<i class="divider"></i>';
      const on = String(i) === bar.dataset.active ? ' class="on"' : '';
      html += `<button${on} aria-label="${t}"><svg><use href="#i-${t}"/></svg></button>`;
    });
  }
  bar.innerHTML = html;
});

// ---- tables ----
const quotes = `ROSN|499,70|0,14%|16 128 089|96 194|8 070 516 ...
IVAT|162,05|14,24%|12 740 034|72 017|2 020 687 ...
VTBR|86,220|0,61%|18 958 430|69 796|1 636 595 ...
SBER|317,48|0,34%|7 876 271|53 300|2 502 120 ...
GAZP|130,17|-0,11%|3 003 065|44 488|3 923 372 ...
NVTK|1 386,8|-1,22%|1 961 263|38 140|2 737 401 ...
RUAL|44,750|-0,40%|3 190 591|28 639|1 438 904 ...
SFIN|877,4|6,14%|624 414|28 004|536 958 361
FLOT|89,27|-0,07%|1 091 642|27 998|975 004 868
SNGSP|47,375|0,76%|2 234 973|26 244|1 057 687 ...
LKOH|5 795,5|-0,28%|380 029|22 369|2 208 217 ...
WUSH|95,48|2,06%|2 868 803|20 043|272 668 808
T|3 397,4|0,65%|545 356|18 729|1 854 561 ...
TATN|633,7|-0,19%|1 297 848|18 484|827 149 022
DATA|109,34|3,56%|1 772 920|18 379|192 042 515
PHOR|7 368|0,57%|156 786|18 027|1 155 385 ...
YDEX|4 524,5|0,38%|232 804|17 573|1 054 640 ...
PLZL|2 439,4|1,27%|298 640|16 496|723 014 230
RNFT|141,35|-2,11%|3 459 052|16 347|491 186 760
SVCB|13,420|-0,82%|699 206|14 920|947 802 227
RENI|92,72|0,08%|105 227|14 673|97 515 812
X5|2 418,5|0,26%|270 961|14 018|656 747 045
RTKM|60,62|0,13%|304 119|13 641|185 102 883
MAGN|30,100|0,33%|831 072|12 661|250 668 157
MTSS|226,90|0,26%|149 918|12 650|340 557 845
SIBN|545,40|-0,40%|497 329|12 534|272 743 141
GMKN|156,78|0,84%|359 553|12 261|561 636 985
GLH6|13 157,7|0,50%|113 350|12 096|1 480 244 ...`;

el('quotes').innerHTML = quotes.split('\n').map((line, i) => {
  const c = line.split('|');
  const cls = c[2][0] === '-' ? 'down' : 'up';
  return `<tr${i ? '' : ' class="selected"'}>` +
    c.map((v, n) => `<td${n === 2 ? ` class="${cls}"` : ''}>${v}</td>`).join('') + '<td></td></tr>';
}).join('');

el('signals').innerHTML = [['12:55:24', 'IVAT'], ['12:16:02', 'ROSN'], ['12:15:48', 'MVID'], ['11:33:58', 'IVAT']]
  .map(([t, s]) => `<tr><td>${t}</td><td>Стакан</td><td>${s}</td><td>Айсберг за...</td><td></td></tr>`).join('');

el('stats').innerHTML = [
  ['0,53', '10,50', '0,53', '11', '3,50', '7,00'],
  ['2,15', '43,00', '2,15', '43', '6,02', '36,98'],
  ['0,85', '17,00', '0,85', '17', '6,51', '10,49']
].map((r, i) => `<tr${i ? '' : ' class="selected"'}>` +
  r.map((v, n) => `<td${n === 4 ? '' : ' class="up"'}>${v}</td>`).join('') + '</tr>').join('');

// ---- charts ----
const COLORS = { g: '#7bd8ae', r: '#8a3040', w: '#b8c8ae' };

let seed = 7;
function rnd() {
  seed = (seed * 16807) % 2147483647;
  return seed / 2147483647;
}

// bars: [x, top, bottom, colour]
function drawPlot(id, box, bars, gridX, gridY, price) {
  const [x0, y0, w, h] = box;
  const d = { g: '', r: '', w: '' };
  bars.forEach(([x, a, b, c]) => { d[c] += `M${x} ${a}V${b}`; });
  let grid = gridX.map(x => `M${x} ${y0}v${h}`).join('') + gridY.map(y => `M${x0} ${y}h${w}`).join('');
  let svg = `<svg viewBox="${box.join(' ')}" preserveAspectRatio="none" fill="none" stroke-width="3">` +
    `<path d="${grid}" stroke="#ffffff" stroke-opacity=".06"/>`;
  svg += gridX.map(x => `<path d="M${x} ${y0 + h - 18}v18" stroke="#666"/>`).join('');
  for (const k in d) svg += `<path d="${d[k]}" stroke="${COLORS[k]}"/>`;
  svg += `<path d="M${price.x} ${price.y}H${x0 + w}" stroke="${price.color}"/></svg>`;
  el(id).insertAdjacentHTML('beforeend', svg);
}

function yLabels(id, labels, tags, y0, h) {
  el(id).innerHTML = labels.map(([t, y]) => `<span style="top:${(y - y0) / h * 100}%">${t}</span>`).join('') +
    tags.map(([t, y, c]) => `<span class="tag ${c}" style="top:${(y - y0) / h * 100}%">${t}</span>`).join('');
}

function xLabels(id, labels, x0, w) {
  el(id).innerHTML = '<span>мар13</span>' +
    labels.map(([t, x]) => `<span style="left:${(x - x0) / w * 100}%">${t}</span>`).join('');
}

function scale(from, step, count, y, dy) {
  return Array.from({ length: count }, (_, i) => [(from - step * i).toFixed(1), y + dy * i]);
}

// ROSN 1S
const rosnBars = `37 562 590 r,55 562 618 r,62 590 618 r,68 560 590 g,78 590 620 r,90 618 620 r,104 560 590 r,112 560 588 r,124 560 648 r,142 530 560 r,152 530 590 r,170 560 592 g,173 592 648 r,195 592 620 w,202 592 620 g,242 575 646 r,250 605 646 r,262 622 626 r,274 620 648 g,286 620 648 g,310 620 648 g,320 648 678 g,333 648 678 g,343 620 650 g,349 650 678 w,368 650 680 r,378 680 708 r,397 708 738 w,403 710 740 r,409 738 970 r,416 910 1000 r,425 850 882 g,436 852 880 r,440 882 912 g,455 852 912 w,461 852 940 g,478 940 960 r,492 940 998 r,502 940 1000 w,515 882 940 w,519 882 940 r,536 940 975 r,545 882 912 r,557 850 882 g,566 825 880 r,578 825 912 r,584 795 850 r,598 795 825 g,605 825 940 r,621 845 942 r,634 740 912 w,638 765 795 g,650 708 738 g,653 620 708 g,662 650 678 r,670 560 708 w,689 530 620 w,694 562 620 r,698 562 620 r,713 560 620 g,716 562 610 g,721 530 620 g,718 620 646 r,735 560 590 r,752 560 592 g,756 530 562 g,773 385 530 g,788 415 445 g,806 415 475 w,812 415 445 r,836 415 530 r,857 415 445 w,860 385 415 r,866 475 505 r,872 475 505 r,878 500 530 r,886 500 530 r,900 445 500 r,913 475 505 g,926 445 475 g,934 475 530 r,941 530 592 r,947 530 560 g,950 560 592 r,956 560 592 w,968 530 562 g,989 560 590 g,1006 560 590 w,1021 560 592 g,1025 592 742 r,1046 765 855 r,1061 795 850 r,1067 795 850 r,1082 825 912 r,1091 912 940 w,1100 912 942 w,1108 912 942 r,1135 825 912 w,1145 795 825 r,1157 678 795 w,1160 650 680 r,1170 650 680 r,1180 700 740 r,1184 648 678 g,1193 680 710 r,1208 648 678 g,1244 648 678 g,1252 648 678 g,1256 560 678 w,1273 530 620 g,1290 530 560 r,1305 530 560 r,1316 530 562 g,1323 530 590 r,1333 620 710 r,1336 590 680 w,1345 590 620 r,1357 620 648 r,1372 648 678 g,1382 648 680 g,1411 620 650 g,1418 650 680 r,1424 648 680 w,1430 650 710 r,1382 620 680 g,1410 620 678 g,1420 648 678 w,1430 648 712 r,1442 620 678 g,1454 678 716 r,1486 620 646 r,1495 620 646 r,1501 590 620 w,1517 530 560 r,1527 530 565 r,1538 502 530 g,1545 502 530 r,1558 445 502 g,1571 387 445 g,1573 387 445 g,1588 445 475 g,1610 445 475 g,1613 387 445 w,1630 415 445 r,1642 415 450 r,1648 415 475 r,1666 387 475 g,1687 475 502 r,1690 445 475 g,1744 445 475 g,1755 430 475 r,1765 410 502 r,1768 445 502 r,1773 445 502 r,1822 415 475 w,1831 415 445 g,1837 355 415 g,1840 327 357 g,1868 327 357 g,1882 327 357 g`
  .split(',').map(s => s.split(' '));
// seconds without a price move
const rosnFlats = [[80, 96, 620], [208, 240, 559], [254, 274, 626], [290, 306, 648], [350, 366, 650], [465, 490, 940], [516, 545, 940], [545, 560, 882],
  [722, 744, 646], [812, 826, 415], [866, 878, 475], [990, 1016, 560], [1022, 1054, 765], [1061, 1080, 850], [1108, 1126, 942], [1165, 1200, 650],
  [1276, 1320, 530], [1340, 1350, 590], [1385, 1410, 620], [1486, 1500, 620], [1618, 1664, 387], [1630, 1650, 415], [1692, 1740, 475], [1710, 1748, 413],
  [1778, 1798, 502], [1778, 1820, 443], [1840, 1880, 327]];
const rosnScale = scale(499.8, 0.1, 13, 300, 58.3);
drawPlot('rosn', [21, 246, 2559, 792], rosnBars, [619, 1323], rosnScale.map(s => s[1]), { x: 1895, y: 328, color: '#8a3040' });
document.querySelector('#rosn > svg').insertAdjacentHTML('beforeend',
  `<path d="${rosnFlats.map(([a, b, y]) => `M${a} ${y}H${b}`).join('')}" stroke="#7a2c3a"/>`);
yLabels('rosn-y', rosnScale, [['499.75', 330, 'red']], 246, 792);
xLabels('rosn-x', [['15:00', 600], ['15:05', 1299]], 0, 2559);

// Trade delta under the ROSN chart
let blue = '', red = '';
for (let x = 5; x < 623; x += 1) {
  const p = rnd();
  const q = rnd();
  const sell = 0.24 + (x > 75 && x < 170 ? 0.28 : 0) + (x > 255 && x < 400 ? 0.14 : 0) - (x > 400 ? 0.08 : 0);
  if (p < 0.24) blue += `M${x + 0.5} 57V0`;
  else if (p > 0.97) blue += `M${x + 0.5} 57V${57 - rnd() * 50}`;
  else if (p > 0.7) blue += `M${x + 0.5} 57V${57 - rnd() * 8}`;
  if (x > 7) red += `M${x + 0.5} 57V${q < sell ? 142 : q > 0.9 ? 57 + rnd() * 60 : 59}`;
}
blue += 'M33 57V0M34 57V0M35 57V0M36 57V0M37 57V0';
el('delta').insertAdjacentHTML('beforeend', `<svg viewBox="0 0 853 142" preserveAspectRatio="none">
  <path d="M5 0h618v57H5z" fill="#0c1a24"/><path d="M8 57h615v85H8z" fill="#2c1013" opacity=".6"/>
  <path d="M0 4h853M0 30h853M0 84h853M0 110h853M0 136h853M199.500 0v142M434.500 0v142" stroke="#fff" stroke-opacity=".06"/>
  <path d="${blue}" stroke="#3a93e4"/><path d="${red}" stroke="#8e1524"/><path d="M3 57.500h620" stroke="#a05070"/></svg>`);
yLabels('delta-y', [['40', 4], ['20', 30], ['-20', 84], ['-40', 110], ['-60', 136]], [['25', 25, 'blue'], ['0', 58, 'crimson']], 0, 142);

// MOEX 1M
const moexPts = `38 460 495,50 450 480,62 440 495,75 440 495,86 440 495,95 430 470,103 400 440,112 395 430,124 398 430,130 292 430,138 312 390,146 300 350,157 292 335,166 325 360,175 360 405,185 338 390,195 365 400,205 375 405,214 385 430,222 405 430,232 400 412,240 370 405,248 322 370,258 345 370,270 345 370,280 355 390,290 355 415,300 375 400,310 370 430,320 363 400,330 365 430,340 365 405,352 365 400,362 362 385,372 370 415,380 395 425,388 430 600,396 490 560,402 520 583,408 460 540,418 460 490,428 450 475,440 425 470,446 405 430,458 405 440,470 405 452,480 405 450,490 375 420,500 378 405,515 370 390,530 372 395,545 365 400,560 365 385,575 360 375,590 363 375,605 362 372,614 375 430,628 385 425,640 375 400,652 362 378,665 360 372,680 372 400,688 375 470,698 400 440,705 385 470,715 420 450,725 430 470,735 435 475,745 435 475,755 408 440,770 408 430,785 408 440,800 405 430,815 408 430,830 405 420,845 385 410,862 362 388,875 372 390,890 380 395,900 385 430,912 385 405,925 385 405,935 385 450,948 390 430,958 385 430,970 382 420,985 382 400,1000 380 385`
  .split(',').map(s => s.split(' ').map(Number));
const moexBars = [];
moexPts.forEach(([x, a, b], i) => {
  const next = moexPts[i + 1] || [x + 10, a, b];
  const rising = next[1] + next[2] <= a + b;
  moexBars.push([x, a, b, rising ? (rnd() > 0.4 ? 'g' : 'w') : 'r']);
  // the minute between two control candles
  const k = 0.2 + rnd() * 0.3;
  const len = (b - a) * k + 6;
  const mid = (a + b + next[1] + next[2]) / 4;
  if (b - a < 120) moexBars.push([(x + next[0]) / 2, mid - len / 2, mid + len / 2, rnd() > 0.6 ? 'r' : rnd() > 0.4 ? 'g' : 'w']);
});
const moexScale = scale(176.4, 0.2, 14, 68, 81.4);
drawPlot('moex', [21, 63, 1197, 1098], moexBars, [223, 472, 722, 968], moexScale.map(s => s[1]), { x: 1008, y: 382, color: '#7bd8ae' });
yLabels('moex-y', moexScale, [['175.63', 384, 'mint']], 63, 1098);
xLabels('moex-x', [['12:00', 220], ['13:00', 469], ['14:00', 718], ['15:00', 967]], 21, 1197);

// BRJ6 15S
const brjPts = `20 300,32 255,45 265,58 315,66 290,80 360,90 430,104 390,122 365,135 450,150 600,160 820,168 700,180 830,190 690,205 590,217 535,230 590,245 630,258 640,270 720,286 860,292 830,300 640,313 480,318 520,330 430,340 450,350 410,365 330,378 300,385 400,392 430,398 370,410 395,420 375,435 390,448 480,460 495,478 490,482 580,487 560,500 550,515 540,520 430,527 410,535 480,550 505,562 540,570 500,582 580,595 610,607 650,615 630,628 560,640 555,650 520,658 530,668 590,675 640,688 740,697 740,710 680,725 630,735 690,745 740,760 800,770 760,785 780,800 810,810 845,820 810,834 730,848 800,856 850,863 850,866 780,880 740,895 690,905 655,922 635`
  .split(',').map(s => s.split(' ').map(Number));
const brjBars = [];
for (let i = 0; i < brjPts.length - 1; i++) {
  const [xa, ya] = brjPts[i];
  const [xb, yb] = brjPts[i + 1];
  for (let x = xa; x < xb; x += 3.4) {
    const y = ya + (yb - ya) * (x - xa) / (xb - xa);
    const len = 10 + rnd() * 24 + Math.min(26, Math.abs(yb - ya) / (xb - xa) * 3);
    const c = yb < ya ? (rnd() > 0.25 ? 'g' : 'w') : (rnd() > 0.25 ? 'r' : 'w');
    brjBars.push([x.toFixed(1), y - len / 2, y + len / 2, c]);
  }
}
brjBars.push([286, 830, 990, 'w'], [482, 480, 692, 'r'], [160, 780, 870, 'g'], [863, 800, 890, 'w'], [518, 372, 480, 'g'], [380, 280, 340, 'r'], [727, 600, 660, 'r']);
const brjScale = scale(101.6, 0.2, 16, 193, 68.2);
drawPlot('brj', [6, 183, 1194, 1098], brjBars, [268, 523, 830], brjScale.map(s => s[1]), { x: 928, y: 646, color: '#8a3040' });
yLabels('brj-y', brjScale, [['100.27', 648, 'red']], 183, 1098);
xLabels('brj-x', [['14:05', 268], ['14:30', 520], ['15:00', 826]], 6, 1194);

// ---- order book ----
const volumes = [1044, 10611, 141, 5354, 1730, 9668, 320, 76, 9, 135, 1136, 917, 101, 1975, 102, 3584, 151580, 9113, 4752, 122,
  2674, 1077, 187, 2144, 1695, 6404, 2308, 9043, 78, 1111, 93, 2666, 1415, 2249, 1485, 3805, 1862, 0, 543, 1922,
  10755, 4626, 1754, 3862, 1600, 12609, 901, 2221, 964, 15863, 1404, 401, 210, 2599, 1199, 12629, 1883, 2520, 2867, 12413,
  10356, 297, 1335, 2501, 2833, 56293, 320, 440, 1032, 4316, 382, 2046, 215, 3076, 7319, 9498, 13, 6538];
const BEST_ASK = 30;

el('book').innerHTML = volumes.map((v, i) => {
  const cents = 50125 - i * 5;
  const price = (cents / 100).toFixed(2).replace('.', ',');
  const round = cents % 250 === 0 ? ' round' : '';
  let cls = i < BEST_ASK ? 'ask' : 'bid';
  if (i === BEST_ASK) cls = 'best-ask';
  if (i === BEST_ASK + 1) cls = 'best-bid';
  if (!v) cls = '';
  const bar = v >= 1000 ? `<i class="${v > 100000 ? 'huge' : v > 50000 ? 'big-bid' : ''}" style="width:${v / 1516}%"></i>` : '';
  const text = v ? String(v).replace(/(\d)(\d{3})$/, '$1 $2') : '';
  return `<tr class="${cls}"><td class="vol">${bar}<span>${text}</span></td><td class="price${round}">${price}</td></tr>`;
}).join('');

el('levels').innerHTML = volumes.map((v, i) => i % 10 === 5 ? `<i style="grid-row:${i + 1}"></i>` : '').join('');

// sells / total per price level, px
const profile = `15 26,15 26,17 26,15 20,18 24,56 85,17 36,15 24,11 20,14 24,7 18,14 26,6 14,7 17,7 17,14 24,6 13,6 13,4 11,7 14,12 18,8 16,17 23,20 25,14 34,51 100,7 21,11 32,6 16,8 20,7 16,7 18,7 20,7 16,4 12,9 17,6 12,10 13,4 10,13 17,7 12,8 18,4 8,8 10,2 5,14 35,1 10,4 10,2 5,5 10,4 9,7 11,9 11,9 11,6 8,20 34,1 4,2 7,3 7,5 12,2 7,2 4,3 5,2 3,2 3,6 21,3 9,2 8,4 11,4 9,3 5,2 4,2 4,2 5,2 5,2 14,4 16,5 16`;
el('profile').innerHTML = profile.split(',').map(s => {
  const [a, b] = s.split(' ').map(Number);
  return `<div><i style="width:${a}px"></i><i style="width:${b - a}px"></i></div>`;
}).join('');

// volume clusters: value and fill, one list per candle
const G = '#183a1a', G2 = '#1a541c', G3 = '#149014', D = '#4a1018', R = '#70081a', R2 = '#a00014', R3 = '#e4000e';
const clusters = [
  [1, 34, [['', G], ['', G], ['', D], ['', G], ['', G], ['', R], ['', R], ['', '#900014'], ['', D], ['', '#60101a'], ['', R], ['', R3], ['', G], ['', G], ['', G], ['', R], ['', R], ['', '#90000e'], ['', R2], ['', D]]],
  [3, 32, [[1702, G], [3049, G], [2267, G], [2606, G], [7992, R], [12026, D], [7870, G], [57931, R3], [5589, G], [7041, G], [5958, G], [2574, G], [6316, G], [5216, G], [1377, G], [2908, G], [2190, D], [404, D], [2764, G], [1943, D]]],
  [5, 30, [[312, G], [4121, G2], [6274, G3], [1670, G2], [7476, '#3a2010'], [5816, '#186a1c'], [1376, D], [419, G], [563, R], [1215, R], [604, G2], [2283, R2], [2753, R3], [919, R]]]
];
let cells = '';
clusters.forEach(([col, row, list]) => list.forEach(([v, c], i) => {
  const cls = (v > 1000 ? 'strong' : '') + (v === 7476 ? ' hot' : '');
  cells += `<span class="${cls}" style="grid-area:${row + i + 1}/${col};background:${c}">${v}</span>`;
}));
cells += '<i style="grid-area:38/2/50/3"></i><i style="grid-area:31/4/39/5"></i>';
el('clusters').innerHTML = cells;

// last trades: x, size, buy, radius (0 draws a box)
const trades = [[25, 200, 0, 0], [61, 46, 0, 10], [94, 11, 0, 10], [137, 300, 0, 0],
  [5, 14, 1, 10], [45, 10, 1, 10], [78, 69, 1, 10], [114, 100, 1, 14], [158, 25, 1, 10]];
el('trades').innerHTML = trades.map(([x, v, buy, r]) => {
  const y = buy ? 360 : 372;
  if (!r) return `<rect x="${x - 13}" y="${y - 8}" width="27" height="16" fill="#8a0010"/>`;
  return `<circle cx="${x}" cy="${y}" r="${r}" fill="${buy ? '#0a9a0a' : '#8a0010'}"${buy ? ' stroke="#3ac83a"' : ''}/>`;
}).join('') + trades.map(([x, v, buy]) => `<text x="${x}" y="${buy ? 364 : 376}">${v}</text>`).join('');
```
